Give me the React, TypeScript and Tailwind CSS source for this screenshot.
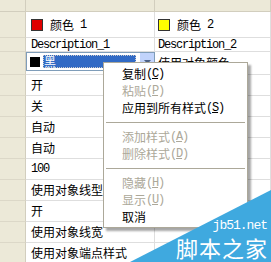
import type { ReactNode } from "react";

const CJK = "font-['Noto_Sans_CJK_SC',sans-serif]";
const MONO = "font-['Liberation_Mono','Noto_Sans_CJK_SC',monospace] tracking-[-1.2px]";

function Mono({ children }: { children: ReactNode }) {
  return <span className={MONO}>{children}</span>;
}

function Row({
  h,
  one,
  two,
}: {
  h: string;
  one?: ReactNode;
  two?: ReactNode;
}) {
  return (
    <div className={`flex ${h}`}>
      <div className="w-[26px] shrink-0 bg-[#ECE9D8] border-r border-b border-r-[#d2cebe] border-b-[#dcd8c8]" />
      <div className="w-[129px] shrink-0 border-r border-b border-[#dedede] flex items-center pl-[5px] overflow-hidden whitespace-nowrap">
        {one}
      </div>
      <div className="w-[116px] shrink-0 border-r border-b border-[#dedede] flex items-center pl-[3px] overflow-hidden whitespace-nowrap">
        {two}
      </div>
    </div>
  );
}

function Swatch({ color }: { color: string }) {
  return <div className={`w-[12px] h-[12px] border border-[#333] mr-[7px] ${color}`} />;
}

function Key({ k }: { k: string }) {
  return (
    <Mono>
      (<u>{k}</u>)
    </Mono>
  );
}

function Item({ label, k, off }: { label: string; k?: string; off?: boolean }) {
  return (
    <div
      className={`h-[17px] flex items-center pl-[18px] whitespace-nowrap ${
        off ? "text-[#aca899]" : "text-black"
      }`}
    >
      {label}
      {k && <Key k={k} />}
    </div>
  );
}

function Sep() {
  return <div className="h-[12px] flex items-center px-[2px]"><div className="w-full h-px bg-[#aca899]" /></div>;
}

export default function App() {
  const rows = [
    "开",
    "关",
    "自动",
    "自动",
    <Mono key="100">100</Mono>,
    "使用对象线型",
    "开",
    "使用对象线宽",
    "使用对象端点样式",
  ];

  return (
    <div className={`relative w-[271px] h-[262px] overflow-hidden bg-white text-[12px] leading-none text-black ${CJK}`}>
      <div className="flex h-[12px] bg-[#ECE9D8]">
        <div className="w-[26px] border-r border-b border-[#d2cebe]" />
        <div className="w-[129px] border-r border-b border-[#d2cebe]" />
        <div className="w-[116px] border-r border-b border-[#d2cebe]" />
      </div>
      <Row
        h="h-[26px]"
        one={
          <>
            <Swatch color="bg-[#e00000]" />
            颜色 <Mono>&nbsp;1</Mono>
          </>
        }
        two={
          <>
            <Swatch color="bg-[#ffff00]" />
            颜色 <Mono>&nbsp;2</Mono>
          </>
        }
      />
      <Row h="h-[14px]" one={<Mono>Description_1</Mono>} two={<Mono>Description_2</Mono>} />
      <div className="flex h-[23px]">
        <div className="w-[26px] shrink-0 bg-[#ECE9D8] border-r border-b border-r-[#d2cebe] border-b-[#dcd8c8]" />
        <div className="w-[129px] shrink-0 border-b border-[#dedede] pb-[3px]">
          <div className="h-full border border-[#7f9db9] flex items-center pl-[3px] gap-[3px]">
            <div className="w-[10px] h-[10px] bg-black" />
            <div className="flex-1 h-[13px] bg-[#316ac5] text-white flex items-center pl-[1px] outline outline-dotted outline-1 outline-[#ccc] -outline-offset-1">
              黑
            </div>
            <div className="w-[15px] h-full bg-[#c1d3fb] border-l border-white flex items-center justify-center">
              <svg width="7" height="4" viewBox="0 0 7 4">
                <path d="M0 0h7L3.5 4z" fill="#4d6185" />
              </svg>
            </div>
          </div>
        </div>
        <div className="w-[116px] shrink-0 border-r border-b border-[#dedede] flex items-center pl-[3px] whitespace-nowrap">
          使用对象颜色
        </div>
      </div>
      {rows.map((r, i) => (
        <Row key={i} h="h-[21px]" one={r} />
      ))}

      <div className="absolute left-[103px] top-[62px] w-[145px] bg-white border border-[#aca899] py-[2px] shadow-[3px_3px_2px_rgba(0,0,0,0.35)]">
        <Item label="复制" k="C" />
        <Item label="粘贴" k="P" off />
        <Item label="应用到所有样式" k="S" />
        <Sep />
        <Item label="添加样式" k="A" off />
        <Item label="删除样式" k="D" off />
        <Sep />
        <Item label="隐藏" k="H" off />
        <Item label="显示" k="U" off />
        <Item label="取消" />
      </div>

      <svg className="absolute right-0 bottom-0" width="141" height="72" viewBox="0 0 141 72">
        <polygon points="0,72 141,0 141,72" fill="#3fa9df" />
      </svg>
      <div className="absolute right-[4px] bottom-[30px] text-white text-[13px] leading-none font-['Liberation_Mono',monospace] tracking-[-1px]">
        jb51.net
      </div>
      <div className="absolute right-[3px] bottom-[4px] text-white text-[22px] tracking-[1px] leading-none whitespace-nowrap">
        脚本之家
      </div>
    </div>
  );
}
